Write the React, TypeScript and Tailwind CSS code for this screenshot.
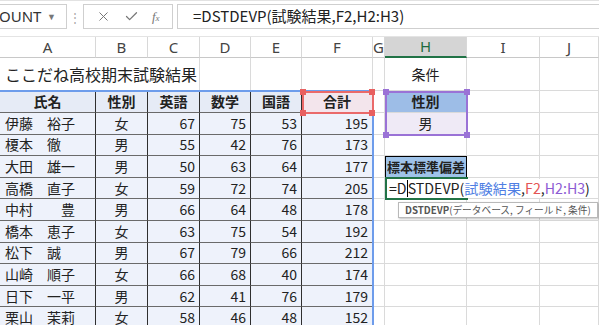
import React from 'react';
import { X, Check } from 'lucide-react';

const jp = "font-['Noto_Sans_CJK_JP','Noto_Sans',sans-serif]";

// column widths A..J
const W = [
  'w-[96px]',
  'w-[52px]',
  'w-[52px]',
  'w-[51px]',
  'w-[51px]',
  'w-[71px]',
  'w-[12px]',
  'w-[82px]',
  'w-[73px]',
  'w-[59px]',
];
const LETTERS = ['A', 'B', 'C', 'D', 'E', 'F', 'G', 'H', 'I', 'J'];

const students: [string, string, number, number, number, number][] = [
  ['伊藤　裕子', '女', 67, 75, 53, 195],
  ['榎本　徹', '男', 55, 42, 76, 173],
  ['大田　雄一', '男', 50, 63, 64, 177],
  ['高橋　直子', '女', 59, 72, 74, 205],
  ['中村　　豊', '男', 66, 64, 48, 178],
  ['橋本　恵子', '女', 63, 75, 54, 192],
  ['松下　誠', '男', 67, 79, 66, 212],
  ['山崎　順子', '女', 66, 68, 40, 174],
  ['日下　一平', '男', 62, 41, 76, 179],
  ['栗山　茉莉', '女', 58, 46, 48, 152],
];

interface CellProps {
  w: string;
  table?: boolean;
  className?: string;
  children?: React.ReactNode;
}

const Cell: React.FC<CellProps> = ({ w, table = false, className = '', children }) => {
  const border = table
    ? 'border-r border-b border-r-[#2f2f2f] border-b-[#6a6a6a]'
    : 'border-r border-b border-r-[#dadada] border-b-[#dadada]';
  return (
    <div className={`${w} shrink-0 h-full ${border} flex items-center whitespace-nowrap ${className}`}>
      {children}
    </div>
  );
};

const Handle: React.FC<{ className: string }> = ({ className }) => (
  <div className={`absolute w-[6px] h-[6px] ${className}`} />
);

const App: React.FC = () => {
  const hCell = (i: number) => {
    if (i === 0) return <Cell w={W[7]} className="justify-center bg-[#efeaf6]">男</Cell>;
    if (i === 2)
      return (
        <Cell w={W[7]} className="justify-center bg-[#9fc3e9] font-bold text-[13px] border-l border-t border-l-black border-t-black border-r-black border-b-black">
          標本標準偏差
        </Cell>
      );
    return <Cell w={W[7]} />;
  };

  return (
    <div className={`relative w-[599px] h-[325px] overflow-hidden bg-white text-[#222] ${jp}`}>
      {/* formula bar */}
      <div className="h-[36px] flex items-start pt-[3px] border-t border-[#e2e2e2]">
        <div className="w-[67px] h-[25px] border border-l-0 border-[#cfcfcf] flex items-center justify-between pr-[10px] font-['Noto_Sans',sans-serif] text-[15px] text-[#333]">
          <span className="-ml-[1px]">OUNT</span>
          <span className="text-[9px] text-[#777]">▼</span>
        </div>
        <div className="w-[16px] h-[25px] flex items-center justify-center text-[#aaa] text-[12px]">⋮</div>
        <div className="w-[90px] h-[25px] border border-[#cfcfcf] flex items-center justify-around px-[6px] text-[#777]">
          <X size={15} strokeWidth={1.6} />
          <Check size={15} strokeWidth={2} />
          <span className="font-['Liberation_Serif',serif] italic text-[13px]">
            f<span className="text-[9px]">x</span>
          </span>
        </div>
        <div className="ml-[4px] flex-1 h-[25px] border border-r-0 border-[#cfcfcf] flex items-center pl-[15px] text-[15px] text-[#222] whitespace-nowrap">
          =DSTDEVP(試験結果,F2,H2:H3)
        </div>
      </div>

      {/* column headers */}
      <div className="h-[22px] flex font-['Noto_Sans',sans-serif] text-[15px] text-[#444] border-t border-[#e4e4e4]">
        {LETTERS.map((l, i) => (
          <div
            key={l}
            className={`${W[i]} shrink-0 h-full flex items-center justify-center border-r border-[#d8d8d8] ${
              l === 'H' ? 'bg-[#d5d5d5] border-b-2 border-b-[#217346] text-[#1e6b3f]' : 'border-b border-b-[#c8c8c8]'
            }`}
          >
            {l}
          </div>
        ))}
      </div>

      {/* row 1 */}
      <div className="h-[33px] flex">
        <div className="w-[200px] shrink-0 h-full border-r border-b border-[#dadada] flex items-center pl-[5px] text-[16px] whitespace-nowrap">
          ここだね高校期末試験結果
        </div>
        <Cell w={W[3]} />
        <Cell w={W[4]} />
        <Cell w={W[5]} />
        <Cell w={W[6]} />
        <Cell w={W[7]} className="justify-center text-[14px]">条件</Cell>
        <Cell w={W[8]} />
        <Cell w={W[9]} />
      </div>

      {/* row 2 : table header */}
      <div className="h-[22px] flex text-[14px] font-bold">
        <Cell w={W[0]} table className="justify-center bg-[#e6ebf6]">氏名</Cell>
        <Cell w={W[1]} table className="justify-center bg-[#e6ebf6]">性別</Cell>
        <Cell w={W[2]} table className="justify-center bg-[#e6ebf6]">英語</Cell>
        <Cell w={W[3]} table className="justify-center bg-[#e6ebf6]">数学</Cell>
        <Cell w={W[4]} table className="justify-center bg-[#e6ebf6]">国語</Cell>
        <Cell w={W[5]} table className="justify-center bg-[#f3e5ec]">合計</Cell>
        <Cell w={W[6]} />
        <Cell w={W[7]} className="justify-center bg-[#9dbde7] border-b-[#666]">性別</Cell>
        <Cell w={W[8]} />
        <Cell w={W[9]} />
      </div>

      {/* data rows */}
      {students.map((s, i) => (
        <div key={s[0]} className="h-[21.6px] flex text-[14px]">
          <Cell w={W[0]} table className="pl-[5px] bg-[#eef2fb]">{s[0]}</Cell>
          <Cell w={W[1]} table className="justify-center bg-[#eef2fb]">{s[1]}</Cell>
          <Cell w={W[2]} table className="justify-end pr-[4px] bg-[#eef2fb]">{s[2]}</Cell>
          <Cell w={W[3]} table className="justify-end pr-[4px] bg-[#eef2fb]">{s[3]}</Cell>
          <Cell w={W[4]} table className="justify-end pr-[4px] bg-[#eef2fb]">{s[4]}</Cell>
          <Cell w={W[5]} table className="justify-end pr-[4px] bg-[#eef2fb]">{s[5]}</Cell>
          <Cell w={W[6]} />
          {hCell(i)}
          <Cell w={W[8]} />
          <Cell w={W[9]} />
        </div>
      ))}

      {/* range highlight: 試験結果 (blue) */}
      <div className="absolute left-0 top-[90px] w-[374px] h-[240px] border-t-2 border-r-2 border-[#6d9ceb] pointer-events-none" />

      {/* F2 reference (red) */}
      <div className="absolute left-[302px] top-[91px] w-[72px] h-[23px] border-2 border-[#ea6a6a]" />
      <Handle className="left-[300px] top-[89px] bg-[#e86060]" />
      <Handle className="left-[369px] top-[89px] bg-[#e86060]" />
      <Handle className="left-[300px] top-[110px] bg-[#e86060]" />
      <Handle className="left-[369px] top-[110px] bg-[#e86060]" />

      {/* H2:H3 reference (purple) */}
      <div className="absolute left-[385px] top-[91px] w-[83px] h-[45px] border-2 border-[#9a72d6]" />
      <Handle className="left-[383px] top-[89px] bg-[#9a72d6]" />
      <Handle className="left-[464px] top-[89px] bg-[#9a72d6]" />
      <Handle className="left-[383px] top-[132px] bg-[#9a72d6]" />
      <Handle className="left-[464px] top-[132px] bg-[#9a72d6]" />

      {/* editing cell H6 */}
      <div className="absolute left-[385px] top-[177px] w-[83px] h-[23px] border-2 border-[#217346]" />
      <div className="absolute left-[387px] top-[179px] h-[19px] pl-[2px] pr-[2px] bg-white flex items-center text-[14.2px] whitespace-nowrap text-[#222]">
        <span>=D</span>
        <span className="w-[1px] h-[17px] bg-black" />
        <span>STDEVP(</span>
        <span className="text-[#4f7ee3]">試験結果</span>
        <span>,</span>
        <span className="text-[#e45454]">F2</span>
        <span>,</span>
        <span className="text-[#8d5bd4]">H2:H3</span>
        <span>)</span>
      </div>

      {/* function tooltip */}
      <div className="absolute left-[398px] top-[202px] h-[16px] px-[6px] bg-white border border-[#b9b9b9] shadow-[1px_1px_2px_rgba(0,0,0,0.25)] flex items-center text-[9.7px] text-[#555] whitespace-nowrap">
        <span className="font-bold">DSTDEVP</span>(データベース, フィールド, 条件)
      </div>
    </div>
  );
};

export default App;
